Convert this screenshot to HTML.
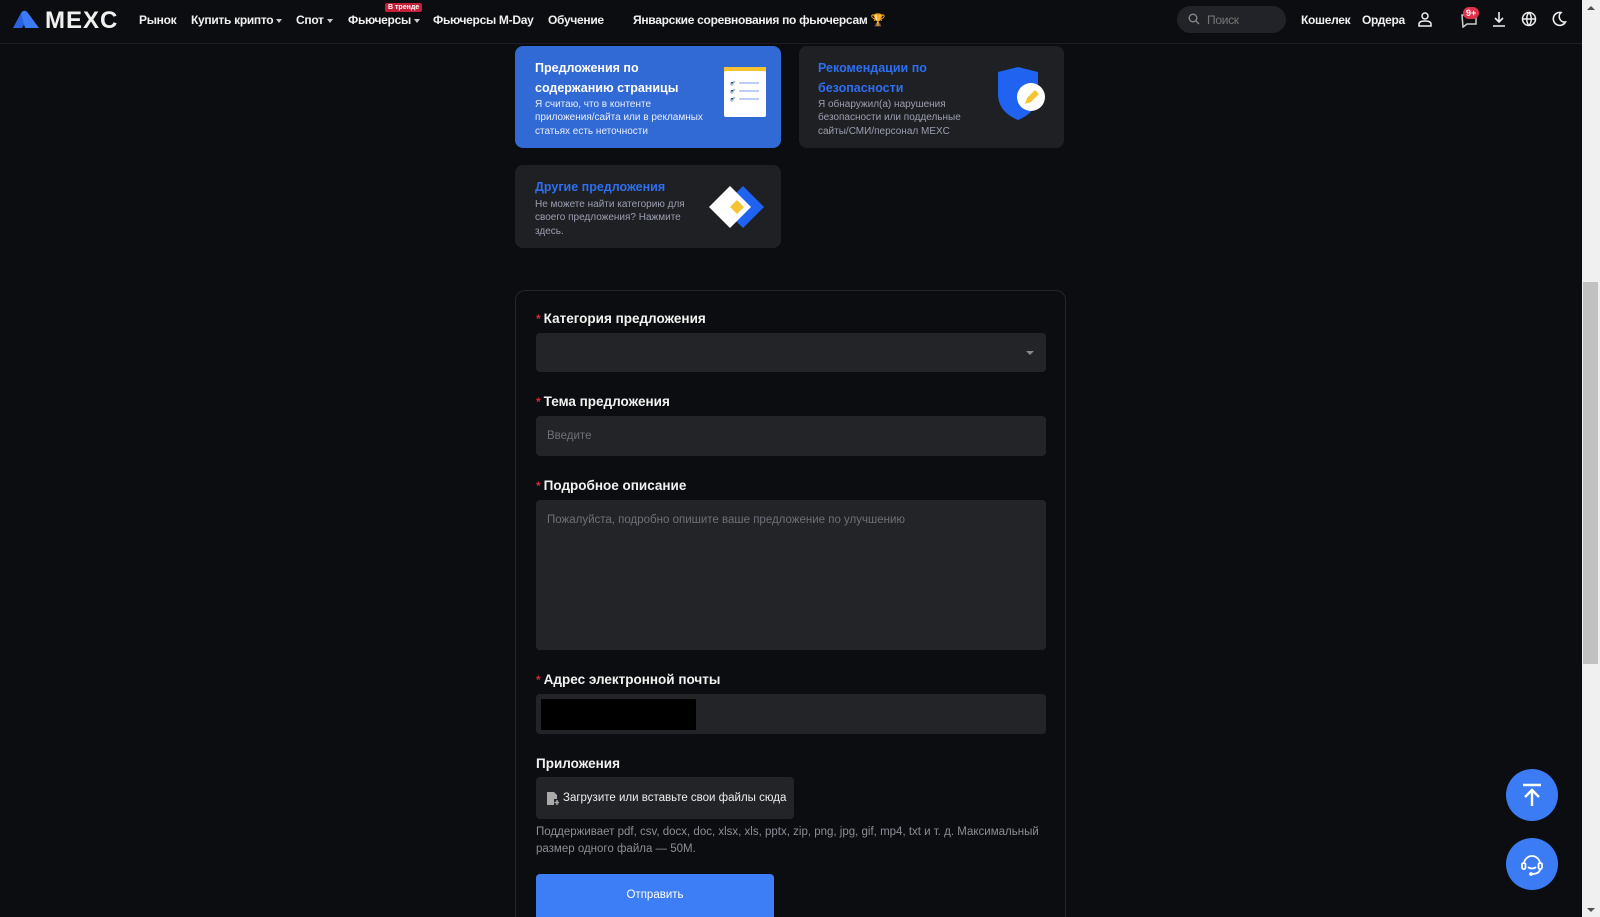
<!DOCTYPE html>
<html><head><meta charset="utf-8"><style>
*{box-sizing:border-box;margin:0;padding:0}
html{width:1600px;height:917px;overflow:hidden}
body{width:1600px;height:917px;overflow:hidden;background:#0c0d10;font-family:"Liberation Sans","Noto Sans CJK SC",sans-serif;color:#fff;position:relative}
.nav{position:absolute;left:0;top:0;width:1582px;height:44px;background:#0c0d10;border-bottom:1px solid #1c1d22}
.nav .it{position:absolute;top:13px;font-size:12px;letter-spacing:-0.3px;font-weight:bold;color:#f0f0f0;white-space:nowrap}
.car{display:inline-block;border-left:3px solid transparent;border-right:3px solid transparent;border-top:4px solid #ccc;vertical-align:middle;margin-left:3px}
.card{position:absolute;border-radius:8px;background:#1f2024}
.card h3{position:absolute;font-size:12.5px;line-height:20px;font-weight:bold}
.card p{position:absolute;font-size:10px;line-height:13.3px}
.form{position:absolute;left:515px;top:290px;width:551px;height:627px;border:1px solid #26272c;border-bottom:none;border-radius:10px 10px 0 0}
.lbl{position:absolute;left:536px;font-size:13.5px;font-weight:bold;color:#f2f2f2}
.lbl b{color:#d6263a;margin-right:3px;font-size:12px}
.inp{position:absolute;left:536px;width:510px;background:#232428;border-radius:4px}
.ph{position:absolute;left:11px;font-size:11.5px;color:#6e7078}
</style></head><body>
<div class="nav">
 <svg style="position:absolute;left:13px;top:10px" width="26" height="18" viewBox="0 0 26 18"><path d="M0 18L8 3l5 8-4 7z" fill="#2a62e0"/><path d="M8 3c2-3 5-3 7 0l11 15H12z" fill="#3b7bf5"/></svg>
 <div class="it" style="left:45px;top:7px;font-size:24px;letter-spacing:1px;font-weight:bold">MEXC</div>
 <div class="it" style="left:139px">Рынок</div>
 <div class="it" style="left:191px">Купить крипто<span class="car"></span></div>
 <div class="it" style="left:296px">Спот<span class="car"></span></div>
 <div class="it" style="left:348px">Фьючерсы<span class="car"></span></div>
 <div style="position:absolute;left:385px;top:3px;background:#c5203a;font-size:7px;font-weight:bold;padding:0 3px;border-radius:2px;line-height:9px">В тренде</div>
 <div class="it" style="left:433px">Фьючерсы M-Day</div>
 <div class="it" style="left:548px">Обучение</div>
 <div class="it" style="left:633px">Январские соревнования по фьючерсам <span style="color:#f0b90b">🏆</span></div>
 <div style="position:absolute;left:1177px;top:6px;width:109px;height:27px;border-radius:14px;background:#222328"></div>
 <svg style="position:absolute;left:1188px;top:13px" width="12" height="12" viewBox="0 0 12 12"><circle cx="5" cy="5" r="3.8" fill="none" stroke="#888" stroke-width="1.4"/><path d="M8 8l3 3" stroke="#888" stroke-width="1.4"/></svg>
 <div class="it" style="left:1207px;color:#777;font-weight:normal">Поиск</div>
 <div class="it" style="left:1301px">Кошелек</div>
 <div class="it" style="left:1362px">Ордера</div>
 <svg style="position:absolute;left:1417px;top:11px" width="16" height="16" viewBox="0 0 16 16" fill="none" stroke="#eee" stroke-width="1.5"><circle cx="8" cy="5" r="3"/><path d="M2 15v-2c0-2 2-3 6-3s6 1 6 3v2z"/></svg>
 <svg style="position:absolute;left:1461px;top:12px" width="16" height="16" viewBox="0 0 16 16"><path d="M1 3h14v9H6l-4 3z" fill="none" stroke="#ccc" stroke-width="1.5"/></svg>
 <div style="position:absolute;left:1463px;top:7px;background:#e0314b;border-radius:8px;font-size:9px;font-weight:bold;padding:0 3px;line-height:12px">9+</div>
 <svg style="position:absolute;left:1491px;top:11px" width="16" height="16" viewBox="0 0 16 16" fill="none" stroke="#eee" stroke-width="1.6"><path d="M8 1v10M4 7l4 4 4-4M2 15h12"/></svg>
 <svg style="position:absolute;left:1521px;top:11px" width="16" height="16" viewBox="0 0 16 16" fill="none" stroke="#eee" stroke-width="1.5"><circle cx="8" cy="8" r="6.5"/><path d="M1.5 8h13M8 1.5c-3 3-3 10 0 13M8 1.5c3 3 3 10 0 13"/></svg>
 <svg style="position:absolute;left:1551px;top:11px" width="16" height="16" viewBox="0 0 16 16"><path d="M10 1.5A6.5 6.5 0 1 0 14.5 11 5.5 5.5 0 0 1 10 1.5z" fill="none" stroke="#eee" stroke-width="1.6"/></svg>
</div>

<div class="card" style="left:515px;top:46px;width:266px;height:102px;background:#3169d5">
 <h3 style="left:20px;top:12px">Предложения по<br>содержанию страницы</h3>
 <p style="left:20px;top:52px;color:#e8eefc">Я считаю, что в контенте<br>приложения/сайта или в рекламных<br>статьях есть неточности</p>
 <div style="position:absolute;left:209px;top:21px;width:42px;height:6px;background:#f5c430"></div>
 <div style="position:absolute;left:209px;top:25px;width:42px;height:46px;background:#fff;border-radius:2px"></div>
 <svg style="position:absolute;left:215px;top:34px" width="32" height="26"><g stroke="#a8bef0" stroke-width="1.6"><path d="M0 3l2 2 3-4M0 11l2 2 3-4M0 19l2 2 3-4"/><path d="M9 3h20M9 11h20M9 19h20"/></g></svg>
</div>
<div class="card" style="left:799px;top:46px;width:265px;height:102px">
 <h3 style="left:19px;top:12px;color:#2d6ff0">Рекомендации по<br>безопасности</h3>
 <p style="left:19px;top:52px;color:#9c9fb0">Я обнаружил(а) нарушения<br>безопасности или поддельные<br>сайты/СМИ/персонал MEXC</p>
 <svg style="position:absolute;left:197px;top:20px" width="52" height="56" viewBox="0 0 52 56"><path d="M2 6l20-5 20 5v22c0 14-10 22-20 26C12 50 2 42 2 28z" fill="#1f63f0"/><circle cx="35" cy="31" r="14" fill="#fff"/><path d="M29 38l2-6 8-8 4 4-8 8z" fill="#f5c430"/></svg>
</div>
<div class="card" style="left:515px;top:165px;width:266px;height:83px">
 <h3 style="left:20px;top:12px;color:#2d6ff0">Другие предложения</h3>
 <p style="left:20px;top:33px;color:#9c9fb0">Не можете найти категорию для<br>своего предложения? Нажмите<br>здесь.</p>
 <svg style="position:absolute;left:194px;top:20px" width="60" height="44" viewBox="0 0 60 44"><path d="M34 1l21 21-21 21-21-21z" fill="#1f63f0"/><path d="M21 1l21 21-21 21L0 22z" fill="#fff"/><path d="M28 15l7 7-7 7-7-7z" fill="#f5c430"/></svg>
</div>

<div class="form"></div>
<div class="lbl" style="top:311px"><b>*</b>Категория предложения</div>
<div class="inp" style="top:333px;height:39px"><div style="position:absolute;right:12px;top:18px;border-left:4px solid transparent;border-right:4px solid transparent;border-top:4px solid #888"></div></div>
<div class="lbl" style="top:394px"><b>*</b>Тема предложения</div>
<div class="inp" style="top:416px;height:40px"><div class="ph" style="top:14px">Введите</div></div>
<div class="lbl" style="top:478px"><b>*</b>Подробное описание</div>
<div class="inp" style="top:500px;height:150px"><div class="ph" style="top:14px">Пожалуйста, подробно опишите ваше предложение по улучшению</div></div>
<div class="lbl" style="top:672px"><b>*</b>Адрес электронной почты</div>
<div class="inp" style="top:694px;height:40px"><div style="position:absolute;left:5px;top:5px;width:155px;height:31px;background:#000"></div></div>
<div class="lbl" style="top:756px">Приложения</div>
<div class="inp" style="top:777px;width:258px;height:42px">
 <svg style="position:absolute;left:11px;top:15px" width="12" height="13" viewBox="0 0 12 13"><path d="M0 0h7l3 3v4H7v6H0z" fill="#aaa"/><path d="M10 8v5M7.5 10.5h5" stroke="#aaa" stroke-width="1.4"/></svg>
 <div style="position:absolute;left:27px;top:15px;font-size:11.5px;color:#eee">Загрузите или вставьте свои файлы сюда</div>
</div>
<div style="position:absolute;left:536px;top:824px;font-size:11.5px;line-height:16.5px;color:#8b8d96;width:520px">Поддерживает pdf, csv, docx, doc, xlsx, xls, pptx, zip, png, jpg, gif, mp4, txt и т. д. Максимальный размер одного файла — 50M.</div>
<div style="position:absolute;left:536px;top:874px;width:238px;height:43px;background:#3d7ef7;border-radius:4px 4px 0 0;font-size:11.5px;text-align:center;line-height:43px">Отправить</div>

<div style="position:absolute;left:1506px;top:769px;width:52px;height:52px;border-radius:50%;background:#3b7cf5"></div>
<svg style="position:absolute;left:1519px;top:782px" width="26" height="26" viewBox="0 0 26 26" fill="none" stroke="#fff" stroke-width="2.4"><path d="M4 3h18M13 24V8M6 15l7-7 7 7"/></svg>
<div style="position:absolute;left:1506px;top:838px;width:52px;height:52px;border-radius:50%;background:#3b7cf5"></div>
<svg style="position:absolute;left:1519px;top:851px" width="26" height="26" viewBox="0 0 26 26" fill="none" stroke="#fff" stroke-width="1.8"><path d="M5 13a8 8 0 0 1 16 0"/><rect x="3" y="12" width="3.5" height="6" rx="1.5"/><rect x="19.5" y="12" width="3.5" height="6" rx="1.5"/><path d="M9 16c2 2 6 2 8 0M21 18c0 3-3 5-8 5"/><circle cx="12" cy="23" r="1" fill="#fff"/></svg>

<div style="position:absolute;left:1582px;top:0;width:18px;height:917px;background:#f0f0f0"></div>
<div style="position:absolute;left:1583px;top:282px;width:15px;height:382px;background:#c1c1c1"></div>
<div style="position:absolute;left:1587px;top:6px;border-left:4px solid transparent;border-right:4px solid transparent;border-bottom:4px solid #505050"></div>
<div style="position:absolute;left:1587px;top:908px;border-left:4px solid transparent;border-right:4px solid transparent;border-top:4px solid #505050"></div>
</body></html>
